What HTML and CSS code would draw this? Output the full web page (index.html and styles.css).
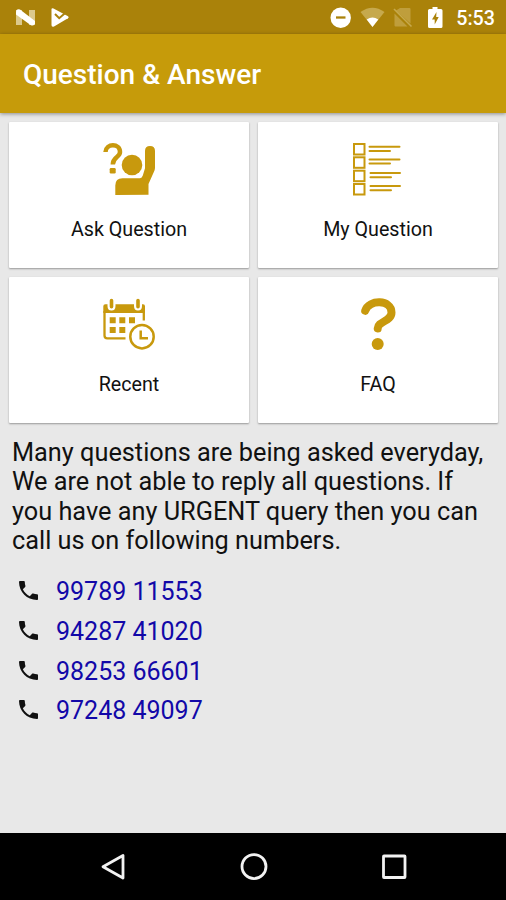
FILE: index.html
```
<!DOCTYPE html>
<html lang="en">
<head>
    <meta charset="utf-8">
    <title>Question &amp; Answer</title>
    <link rel="stylesheet" href="styles.css">
</head>

<body>
<div class="status-bar">
    <svg class="status-left" width="60" height="34" viewBox="0 0 60 34">
        <path d="M1 10h6v15H1z M14 10h6v15h-6z" fill="#dcc98c"/>
        <path d="M1 12.500Q1 8.500 5 9.500L20 21V23.500Q19 26.500 15.500 25L1 14.500z" fill="#fff"/>
        <path d="M36.500 9.500Q36.500 7.500 38.500 8.500L53 16.200Q54.500 17.300 53 18.300L39 26.500Q36.500 27.500 36.500 25z" fill="#fff"/>
        <path d="M40 14l4.200 4.200L52.500 11" fill="none" stroke="#aa820a" stroke-width="2"/>
    </svg>
    <svg class="status-right" width="120" height="34" viewBox="0 0 120 34">
        <circle cx="10.700" cy="17.700" r="10.200" fill="#fff"/>
        <path d="M6 17.500h9.500" stroke="#aa820a" stroke-width="2.300"/>
        <path d="M30.500 12Q42.500 3.500 54.500 12L42.500 27z" fill="#c6a94d"/>
        <path d="M36.700 19.500Q42.500 15.500 48.300 19.500L42.500 27z" fill="#fff"/>
        <path d="M70 8h9.500q1 0 1 1v14.500L66 10.500z M64.500 13.500L77.500 26.500H65.500q-1 0-1-1z" fill="#bf9e3c"/>
        <path d="M64 9l17.500 17.500" stroke="#c6a94d" stroke-width="1.600"/>
        <path d="M102.500 7h5v2h3.500q1.500 0 1.500 1.500v16q0 1.500-1.500 1.500h-11.500q-1.500 0-1.500-1.500v-16q0-1.500 1.500-1.500h3z" fill="#fff"/>
        <path d="M106.500 12L102 19.500h2.700v5l4-7.500h-2.500z" fill="#aa820a"/>
    </svg>
    <span class="time">5:53</span>
</div>

<header class="toolbar">
    <h1>Question &amp; Answer</h1>
</header>

<main class="content">
    <div class="cards">
        <div class="card">
            <svg class="icon" viewBox="0 0 54 54">
                <path class="line butt" stroke-width="4.500" d="M2.500 10C3 1 17 1.200 17 10C17 15.500 9.800 14.500 9.800 22.500"/>
                <rect x="6.700" y="26" width="6" height="5.500" rx="1.200"/>
                <circle cx="29" cy="23" r="10.300"/>
                <path d="M12.300 53V43.500Q12.300 36.300 19.500 36.300H37Q39 36 39.800 33.500L42 26.300V9Q42 4 47 4T52 9V25.500Q52 27 51.500 28.500L45.500 42V52.800z"/>
            </svg>
            <span class="label">Ask Question</span>
        </div>
        <div class="card">
            <svg class="icon" viewBox="0 0 54 54">
                <g class="line" stroke-width="2">
                    <rect x="2" y="2" width="10.500" height="10.500"/>
                    <rect x="2" y="15.300" width="10.500" height="10.500"/>
                    <rect x="2" y="28.700" width="10.500" height="10.500"/>
                    <rect x="2" y="42" width="10.500" height="10.500"/>
                    <path d="M17.500 4.800H47.500M17.500 9H38M17.500 17.500H47.500M17.500 21.500H38M18.500 31H48M18.500 35.200H39M18.500 44H48M18.500 48.300H39"/>
                </g>
            </svg>
            <span class="label">My Question</span>
        </div>
        <div class="card">
            <svg class="icon" viewBox="0 0 54 54">
                <path d="M.3 9.300q0-2 2-2H4.500V9q0 4.500 4 4.500T12.500 9V7.300H31V9q0 4.500 4 4.500T39 9V7.300h1q2 0 2 2V16H.3z"/>
                <path class="line" stroke-width="3.600" d="M8.500 3.500V9.700M35 3.500V9.700"/>
                <path class="line butt" stroke-width="2.300" d="M1.500 14V38.500Q1.500 41.300 4.300 41.300H22.500M40.800 14V23.500"/>
                <path d="M6.700 20.300h6v6h-6zM16.300 20.300h6v6h-6zM26 20.300h6v6h-6zM6.700 30h6v6h-6zM16.300 30h6v6h-6z"/>
                <circle class="line" cx="39" cy="39.700" r="11.700" stroke-width="2.500"/>
                <path class="line butt" stroke-width="2.500" d="M37.700 33.500V41.300H45"/>
            </svg>
            <span class="label">Recent</span>
        </div>
        <div class="card">
            <svg class="icon" viewBox="0 0 54 54">
                <path class="line" stroke-width="8" d="M13.200 13.800C17 2 39.500 2.500 39.500 15.500C39.500 24.500 26 24 25.700 31.500"/>
                <circle cx="25.700" cy="47" r="6"/>
            </svg>
            <span class="label">FAQ</span>
        </div>
    </div>

    <p class="note">Many questions are being asked everyday, We are not able to reply all questions. If you have any URGENT query then you can call us on following numbers.</p>

    <svg class="defs">
        <symbol id="phone" viewBox="3 3 18 18">
            <path d="M6.620 10.790c1.440 2.830 3.760 5.140 6.590 6.590l2.200-2.200c.27-.27.670-.36 1.020-.24 1.120.37 2.330.57 3.570.57.550 0 1 .45 1 1V20c0 .55-.45 1-1 1-9.390 0-17-7.610-17-17 0-.55.450-1 1-1h3.500c.55 0 1 .45 1 1 0 1.250.2 2.450.57 3.570.11.350.03.740-.25 1.020l-2.200 2.200z"/>
        </symbol>
    </svg>
    <ul class="phones">
        <li><svg class="phone"><use href="#phone"/></svg>99789 11553</li>
        <li><svg class="phone"><use href="#phone"/></svg>94287 41020</li>
        <li><svg class="phone"><use href="#phone"/></svg>98253 66601</li>
        <li><svg class="phone"><use href="#phone"/></svg>97248 49097</li>
    </ul>
</main>

<nav class="nav-bar">
    <svg width="30" height="30" viewBox="0 0 30 30"><path d="M24 4.500V27L4 15.700z"/></svg>
    <svg width="30" height="30" viewBox="0 0 30 30"><circle cx="15" cy="15.600" r="12"/></svg>
    <svg width="30" height="30" viewBox="0 0 30 30"><rect x="4.500" y="5" width="21.500" height="21.500" rx=".5"/></svg>
</nav>
</body>
</html>
```
FILE: styles.css
```
* {
    box-sizing: border-box;
}

body {
    margin: 0;
    height: 900px;

    display: flex;
    flex-direction: column;

    background-color: #e8e8e8;
    color: #111;
    font-family: Roboto, sans-serif;
    overflow: hidden;
}

.status-bar {
    height: 34px;
    padding: 0 11px 0 15px;

    display: flex;
    align-items: center;

    background-color: #aa820a;
    color: #fff;
}

.status-right {
    margin-left: auto;
}

.time {
    width: 45px;
    padding-top: 2px;
    text-align: right;
    font-size: 19.7px;
    font-weight: 500;
}

.toolbar {
    height: 79px;
    padding: 2px 23px 0;

    display: flex;
    align-items: center;

    background-color: #c69b0a;
    color: #fff;
    box-shadow: 0 1px 4px rgba(0, 0, 0, 0.4);
}

h1 {
    margin: 0;
    font-size: 28px;
    font-weight: 500;
}

.content {
    flex: 1;
    padding: 9px 8px 0 9px;
}

.cards {
    display: grid;
    grid-template-columns: 1fr 1fr;
    gap: 8.6px 9px;
}

.card {
    height: 146px;
    padding-top: 20px;

    display: flex;
    flex-direction: column;
    align-items: center;

    background-color: #fff;
    border-radius: 1px;
    box-shadow: 0 1px 2px rgba(0, 0, 0, 0.35);
}

.icon {
    width: 54px;
    height: 54px;
    margin-left: 2px;
    fill: #c8990d;
}

.line {
    fill: none;
    stroke: #c8990d;
    stroke-linecap: round;
}

.butt {
    stroke-linecap: butt;
}

.label {
    margin-top: 22px;
    font-size: 19.7px;
    line-height: 24px;
}

.note {
    margin: 15.4px 0 0 3px;
    width: 484px;
    font-size: 25.3px;
    line-height: 29.5px;
}

.defs {
    display: none;
}

.phones {
    margin: 16px 0 0;
    padding: 0 0 0 10px;
    list-style: none;

    font-size: 25px;
    color: #1208a8;
}

.phones li {
    height: 39.7px;
    display: flex;
    align-items: center;
}

.phone {
    width: 19px;
    height: 19px;
    margin: 0 18px 2px 0;
    fill: #111;
}

.nav-bar {
    height: 67px;
    padding: 0 97px 1px 99px;

    display: flex;
    align-items: center;
    justify-content: space-between;

    background-color: #000;
}

.nav-bar svg {
    fill: none;
    stroke: #f2f2f2;
    stroke-width: 2.8;
    stroke-linejoin: round;
}
```
